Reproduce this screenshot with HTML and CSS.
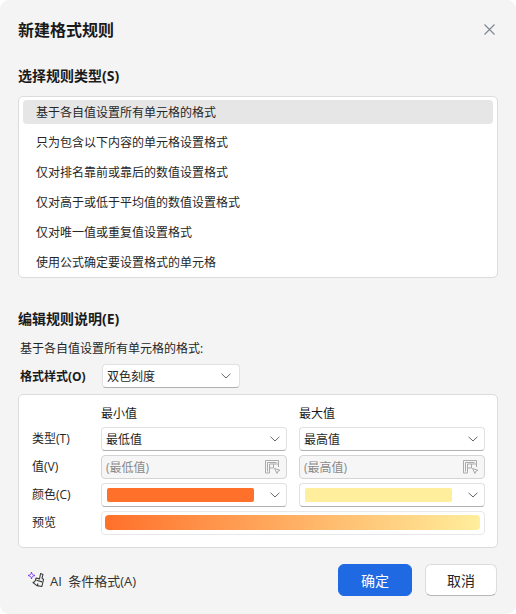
FILE: index.html
```html
<!DOCTYPE html>
<html lang="zh-CN">
<head>
<meta charset="utf-8">
<title>新建格式规则</title>
<link rel="stylesheet" href="styles.css">
</head>
<body>
<div class="dialog">
  <header class="title-bar">
    <h1 class="title">新建格式规则</h1>
    <svg class="close" width="11" height="11" viewBox="0 0 11 11"><path d="M.5.5l10 10M10.500.5l-10 10" stroke="#7c8590" stroke-width="1.100" fill="none"/></svg>
  </header>

  <h2 class="heading heading-rule">选择规则类型(S)</h2>
  <ul class="rule-list">
    <li class="rule selected">基于各自值设置所有单元格的格式</li>
    <li class="rule">只为包含以下内容的单元格设置格式</li>
    <li class="rule">仅对排名靠前或靠后的数值设置格式</li>
    <li class="rule">仅对高于或低于平均值的数值设置格式</li>
    <li class="rule">仅对唯一值或重复值设置格式</li>
    <li class="rule">使用公式确定要设置格式的单元格</li>
  </ul>

  <h2 class="heading heading-edit">编辑规则说明(E)</h2>
  <p class="desc">基于各自值设置所有单元格的格式:</p>
  <div class="style-row">
    <span class="style-label">格式样式(O)</span>
    <div class="select style-select"><span>双色刻度</span><svg class="chev" width="10" height="6" viewBox="0 0 10 6"><path d="M.6.8L5 5l4.400-4.200" stroke="#666" fill="none"/></svg></div>
  </div>

  <section class="panel">
    <span></span><span class="col-head">最小值</span><span class="col-head">最大值</span>

    <span class="row-label">类型(T)</span>
    <div class="select"><span>最低值</span><svg class="chev" width="10" height="6" viewBox="0 0 10 6"><path d="M.6.8L5 5l4.400-4.200" stroke="#666" fill="none"/></svg></div>
    <div class="select"><span>最高值</span><svg class="chev" width="10" height="6" viewBox="0 0 10 6"><path d="M.6.8L5 5l4.400-4.200" stroke="#666" fill="none"/></svg></div>

    <span class="row-label">值(V)</span>
    <div class="select disabled"><span>(最低值)</span><svg class="ref" width="16" height="14" viewBox="0 0 16 14"><path d="M.5.5h13v3.500h-9v9h-4zM2.500 2.500h9M2.500 2.500v9M8.500 4v4H4.500M13.500 4v3" stroke="#aaa" fill="none"/><path d="M9.500 8.500l5.500 1.800-2.200 1-.8 2.200z" stroke="#aaa" fill="#f6f6f6"/></svg></div>
    <div class="select disabled"><span>(最高值)</span><svg class="ref" width="16" height="14" viewBox="0 0 16 14"><path d="M.5.5h13v3.500h-9v9h-4zM2.500 2.500h9M2.500 2.500v9M8.500 4v4H4.500M13.500 4v3" stroke="#aaa" fill="none"/><path d="M9.500 8.500l5.500 1.800-2.200 1-.8 2.200z" stroke="#aaa" fill="#f6f6f6"/></svg></div>

    <span class="row-label">颜色(C)</span>
    <div class="select color"><i class="swatch swatch-low"></i><svg class="chev" width="10" height="6" viewBox="0 0 10 6"><path d="M.6.8L5 5l4.400-4.200" stroke="#666" fill="none"/></svg></div>
    <div class="select color"><i class="swatch swatch-high"></i><svg class="chev" width="10" height="6" viewBox="0 0 10 6"><path d="M.6.8L5 5l4.400-4.200" stroke="#666" fill="none"/></svg></div>

    <span class="row-label">预览</span>
    <div class="preview"><i class="gradient"></i></div>
  </section>

  <footer class="footer">
    <div class="ai">
      <svg width="18" height="18" viewBox="0 0 18 18"><path d="M4.500 1C4.800 3.200 5.300 3.700 8 4.500 5.300 5.300 4.800 5.800 4.500 8 4.200 5.800 3.700 5.300 1 4.500 3.700 3.700 4.200 3.200 4.500 1z" fill="#efe8ff" stroke="#7a3cf0" stroke-width="1"/><path d="M13.600 2.500l2.400.9-1 3.700 1.500 1.400-1.600 7-5-.9-3.900-3c1.800-.6 2.800-2.200 3-4.600l3.500.9zM9.500 9.200l5.600 1.700M10 15l1-2.500" fill="none" stroke="#3a3a3a" stroke-width="1.100" stroke-linejoin="round"/></svg>
      <span class="ai-text">AI 条件格式(A)</span>
    </div>
    <div class="actions">
      <button class="btn primary">确定</button>
      <button class="btn">取消</button>
    </div>
  </footer>
</div>
</body>
</html>
```
FILE: styles.css
```css
* { box-sizing: border-box; }
html, body { margin: 0; padding: 0; background: #fff; }
body {
  width: 516px;
  height: 614px;
  overflow: hidden;
  font-family: "Open Sans", "Noto Sans CJK SC", sans-serif;
  font-size: 12px;
  color: #222;
}
.dialog {
  width: 516px;
  height: 614px;
  background: #f4f4f4;
  border-radius: 9px;
  padding: 0 18px;
  display: flex;
  flex-direction: column;
}
.title-bar {
  height: 60px;
  flex: none;
  display: flex;
  align-items: center;
  justify-content: space-between;
  padding-right: 3px;
}
.title { margin: 0; font-size: 16px; line-height: 20px; font-weight: 700; color: #1a1a1a; }
.close { display: block; margin-bottom: 1px; }
.heading { margin: 0; font-size: 14px; line-height: 20px; font-weight: 700; color: #1a1a1a; flex: none; }
.heading-rule { margin-top: 6px; }
.heading-edit { margin-top: 31px; }
.rule-list {
  list-style: none;
  margin: 10px 0 0;
  padding: 3px 4px;
  height: 182px;
  flex: none;
  background: #fff;
  border: 1px solid #dcdcdc;
  border-radius: 5px;
  display: flex;
  flex-direction: column;
  gap: 6px;
}
.rule {
  height: 24px;
  flex: none;
  line-height: 25px;
  padding-left: 13px;
  border-radius: 4px;
  color: #262626;
}
.selected { background: #e6e6e6; }
.desc { margin: 11px 0 0 2px; line-height: 18px; color: #262626; flex: none; }
.style-row {
  margin: 6px 0 0 2px;
  height: 24px;
  flex: none;
  display: flex;
  align-items: center;
}
.style-label { width: 82px; font-weight: 700; color: #1a1a1a; }
.select {
  height: 24px;
  background: #fff;
  border: 1px solid #e2e2e2;
  border-bottom-color: #b0b0b0;
  border-radius: 4px;
  display: flex;
  align-items: center;
  justify-content: space-between;
  padding: 0 6px 0 4px;
  color: #262626;
}
.style-select { width: 138px; padding-right: 8px; }
.chev { display: block; flex: none; }
.panel {
  margin-top: 6px;
  height: 154px;
  flex: none;
  background: #fff;
  border: 1px solid #dcdcdc;
  border-radius: 5px;
  padding: 10px 12px 0 13px;
  display: grid;
  grid-template-columns: 57px 186px 186px;
  grid-template-rows: 18px 24px 24px 24px 24px;
  column-gap: 12px;
  row-gap: 4px;
  align-items: center;
}
.col-head { line-height: 18px; color: #1a1a1a; }
.row-label { color: #262626; line-height: 18px; }
.disabled {
  background: #f6f6f6;
  border: 1px solid #d4d4d4;
  color: #8a8a8a;
  padding-right: 5px;
}
.ref { display: block; flex: none; }
.color { padding-left: 5px; }
.swatch { display: block; width: 147px; height: 14px; border-radius: 2px; }
.swatch-low { background: #ff702a; }
.swatch-high { background: #ffee9c; }
.preview {
  grid-column: 2 / 4;
  height: 24px;
  background: #fff;
  border: 1px solid #e8e8e8;
  border-radius: 4px;
  padding: 3px 4px 3px 3px;
}
.gradient {
  display: block;
  height: 15px;
  border-radius: 4px;
  background: linear-gradient(90deg, #ff702a, #ffee9c);
}
.footer {
  margin-top: 16px;
  height: 32px;
  flex: none;
  display: flex;
  align-items: center;
  justify-content: space-between;
  padding-right: 1px;
}
.ai { display: flex; align-items: center; gap: 5px; padding-left: 9px; font-size: 13px; color: #333; }
.ai svg { display: block; }
.ai-text { word-spacing: 3px; }
.actions { display: flex; gap: 13px; }
.btn {
  width: 72px;
  height: 32px;
  border-radius: 6px;
  border: 1px solid #dcdcdc;
  border-bottom-color: #b8b8b8;
  background: #fff;
  color: #262626;
  font: inherit;
  font-size: 14px;
  padding: 0;
}
.primary {
  width: 74px;
  background: #1f6ae2;
  border-color: #1f6ae2;
  color: #fff;
}
```
